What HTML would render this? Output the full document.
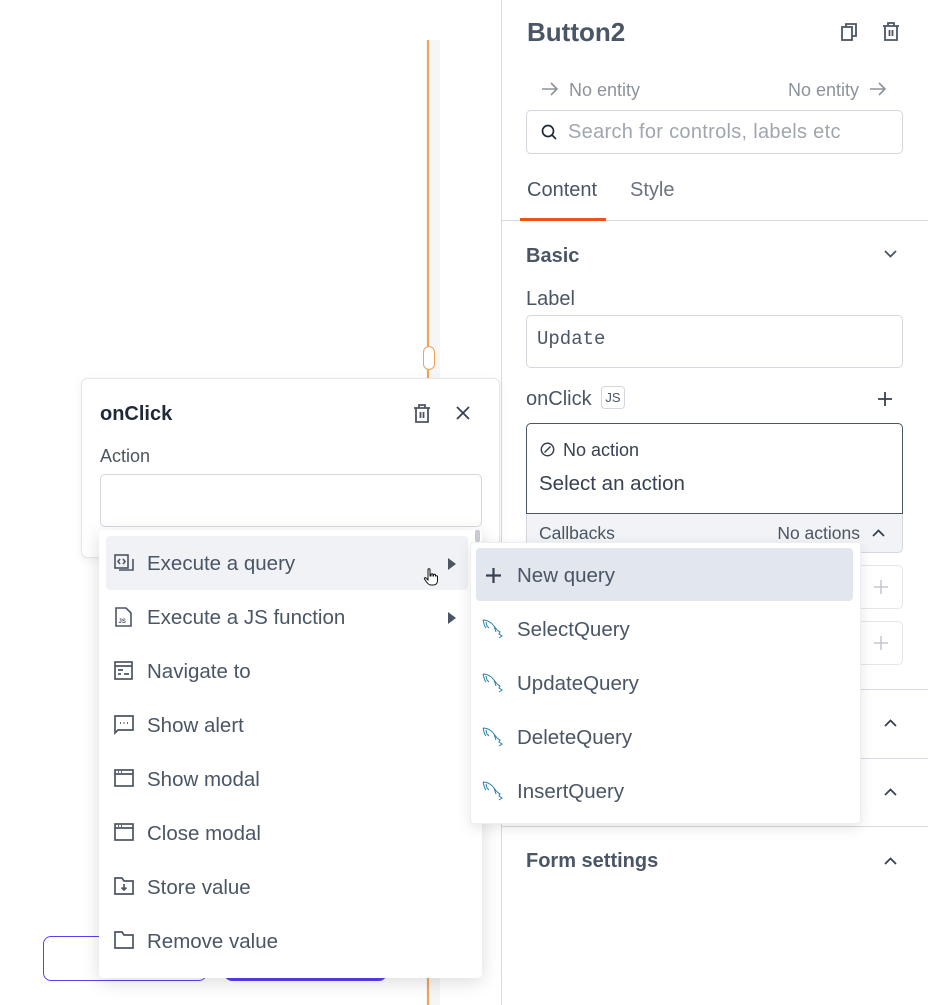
<!DOCTYPE html>
<html><head><meta charset="utf-8"><style>
*{box-sizing:border-box;margin:0;padding:0}
body{width:928px;height:1005px;position:relative;overflow:hidden;background:#fff;font-family:"Liberation Sans",sans-serif;color:#4b5563}
.a{position:absolute}
.t{position:absolute;white-space:nowrap;line-height:1}
svg{position:absolute;overflow:visible}
</style></head><body>
<!-- canvas -->
<div class="a" style="left:426px;top:40px;width:14px;height:965px;background:#f5f6f8"></div>
<div class="a" style="left:427px;top:40px;width:2px;height:965px;background:#f7a156"></div>
<div class="a" style="left:423px;top:346px;width:12px;height:24px;border:1.5px solid #f7a156;border-radius:6px;background:#fff"></div>
<div class="a" style="left:43px;top:936px;width:164px;height:45px;border:1.5px solid #5b3ff0;border-radius:8px"></div>
<div class="a" style="left:224px;top:936px;width:163px;height:45px;background:#5b3ff0;border-radius:8px"></div>

<!-- right panel -->
<div class="a" style="left:501px;top:0;width:1px;height:1005px;background:#d6dbe1"></div>
<div class="t" style="left:527px;top:19px;font-size:26px;font-weight:bold;color:#4a5565">Button2</div>
<svg style="left:840px;top:22px" width="20" height="20" viewBox="0 0 20 20" fill="none" stroke="#4b5563" stroke-width="1.8"><rect x="2" y="5" width="10" height="13"/><path d="M6 5V2h10v12h-4"/></svg>
<svg style="left:881px;top:21px" width="20" height="20" viewBox="0 0 20 20" fill="none" stroke="#4b5563" stroke-width="1.8"><path d="M2 5h16M7 5V2h6v3M4 5v14h12V5M8.5 9v6M11.5 9v6"/></svg>
<svg style="left:541px;top:81px" width="18" height="16" viewBox="0 0 18 16" fill="none" stroke="#8d939c" stroke-width="1.6"><path d="M1 8h15M10 2l6 6-6 6"/></svg>
<div class="t" style="left:569px;top:81px;font-size:18px;color:#8d939c">No entity</div>
<div class="t" style="left:788px;top:81px;font-size:18px;color:#8d939c">No entity</div>
<svg style="left:869px;top:81px" width="18" height="16" viewBox="0 0 18 16" fill="none" stroke="#8d939c" stroke-width="1.6"><path d="M1 8h15M10 2l6 6-6 6"/></svg>
<div class="a" style="left:526px;top:110px;width:377px;height:44px;border:1px solid #d2d8de;border-radius:5px"></div>
<svg style="left:541px;top:124px" width="16" height="16" viewBox="0 0 16 16" fill="none" stroke="#1f2937" stroke-width="1.7"><circle cx="7" cy="7" r="5.5"/><path d="M11 11l4 4"/></svg>
<div class="t" style="left:568px;top:122px;font-size:20px;letter-spacing:0.3px;color:#a0a6ae">Search for controls, labels etc</div>
<div class="t" style="left:527px;top:180px;font-size:20px;color:#4a5565">Content</div>
<div class="t" style="left:630px;top:180px;font-size:20px;color:#6b7280">Style</div>
<div class="a" style="left:501px;top:220px;width:427px;height:1px;background:#d6dbe1"></div>
<div class="a" style="left:520px;top:218px;width:86px;height:3px;background:#e8541a"></div>
<div class="t" style="left:526px;top:246px;font-size:20px;font-weight:bold;color:#4a5565">Basic</div>
<svg style="left:884px;top:250px" width="13" height="9" viewBox="0 0 13 9" fill="none" stroke="#4b5563" stroke-width="1.8"><path d="M1 1l5.5 5.5L12 1"/></svg>
<div class="t" style="left:526px;top:289px;font-size:20px;color:#4a5565">Label</div>
<div class="a" style="left:526px;top:315px;width:377px;height:53px;border:1px solid #d2d8de;border-radius:5px"></div>
<div class="t" style="left:537px;top:330px;font-size:19px;font-family:'Liberation Mono',monospace;color:#4a5565">Update</div>
<div class="t" style="left:526px;top:389px;font-size:20px;color:#4a5565">onClick</div>
<div class="a" style="left:601px;top:386px;width:24px;height:23px;border:1px solid #d2d8de;border-radius:4px;font-size:13px;line-height:21px;text-align:center;color:#4b5563">JS</div>
<svg style="left:877px;top:391px" width="16" height="16" viewBox="0 0 16 16" stroke="#374151" stroke-width="1.8"><path d="M8 1v14M1 8h14"/></svg>
<div class="a" style="left:526px;top:423px;width:377px;height:130px;border:1px solid #d2d8de;border-radius:5px;background:#f1f3f6"></div>
<div class="a" style="left:526px;top:423px;width:377px;height:91px;border:1px solid #4b5563;border-radius:5px 5px 0 0;background:#fff"></div>
<svg style="left:540px;top:442px" width="15" height="15" viewBox="0 0 15 15" fill="none" stroke="#374151" stroke-width="1.5"><circle cx="7.5" cy="7.5" r="6.2"/><path d="M4.5 10.5l6-6"/></svg>
<div class="t" style="left:563px;top:441px;font-size:18px;color:#374151">No action</div>
<div class="t" style="left:539px;top:474px;font-size:20.5px;color:#374151">Select an action</div>
<div class="t" style="left:539px;top:525px;font-size:17.5px;color:#4b5563">Callbacks</div>
<div class="t" style="right:68px;top:525px;font-size:17.5px;color:#4b5563">No actions</div>
<svg style="left:872px;top:529px" width="13" height="8" viewBox="0 0 13 8" fill="none" stroke="#374151" stroke-width="1.8"><path d="M1 7l5.5-5.5L12 7"/></svg>
<div class="a" style="left:526px;top:565px;width:377px;height:44px;border:1px solid #e3e6ea;border-radius:5px"></div>
<div class="a" style="left:526px;top:621px;width:377px;height:44px;border:1px solid #e3e6ea;border-radius:5px"></div>
<svg style="left:873px;top:579px" width="16" height="16" viewBox="0 0 16 16" stroke="#c4c8ce" stroke-width="1.5"><path d="M8 1v14M1 8h14"/></svg>
<svg style="left:873px;top:635px" width="16" height="16" viewBox="0 0 16 16" stroke="#c4c8ce" stroke-width="1.5"><path d="M8 1v14M1 8h14"/></svg>
<div class="a" style="left:501px;top:689px;width:427px;height:1px;background:#d6dbe1"></div>
<div class="a" style="left:501px;top:758px;width:427px;height:1px;background:#d6dbe1"></div>
<div class="a" style="left:501px;top:826px;width:427px;height:1px;background:#d6dbe1"></div>
<svg style="left:884px;top:719px" width="13" height="8" viewBox="0 0 13 8" fill="none" stroke="#374151" stroke-width="1.8"><path d="M1 7l5.5-5.5L12 7"/></svg>
<svg style="left:884px;top:788px" width="13" height="8" viewBox="0 0 13 8" fill="none" stroke="#374151" stroke-width="1.8"><path d="M1 7l5.5-5.5L12 7"/></svg>
<svg style="left:884px;top:857px" width="13" height="8" viewBox="0 0 13 8" fill="none" stroke="#374151" stroke-width="1.8"><path d="M1 7l5.5-5.5L12 7"/></svg>
<div class="t" style="left:526px;top:851px;font-size:20px;font-weight:bold;color:#4a5565">Form settings</div>

<!-- onClick card -->
<div class="a" style="left:81px;top:378px;width:419px;height:180px;border:1px solid #e3e6ea;border-radius:6px;background:#fff;box-shadow:0 2px 10px rgba(0,0,0,.06)"></div>
<div class="t" style="left:100px;top:404px;font-size:20px;font-weight:bold;color:#1f2937">onClick</div>
<svg style="left:412px;top:403px" width="20" height="20" viewBox="0 0 20 20" fill="none" stroke="#4b5563" stroke-width="1.8"><path d="M2 5h16M7 5V2h6v3M4 5v14h12V5M8.5 9v6M11.5 9v6"/></svg>
<svg style="left:456px;top:406px" width="14" height="14" viewBox="0 0 14 14" stroke="#374151" stroke-width="1.8"><path d="M1 1l12 12M13 1L1 13"/></svg>
<div class="t" style="left:100px;top:447px;font-size:18px;color:#4b5563">Action</div>
<div class="a" style="left:100px;top:474px;width:382px;height:53px;border:1px solid #d2d8de;border-radius:5px"></div>

<!-- dropdown -->
<div class="a" style="left:99px;top:530px;width:383px;height:448px;background:#fff;border-radius:4px;box-shadow:0 4px 18px rgba(0,0,0,.14)"></div>
<div class="a" style="left:475px;top:530px;width:5px;height:12px;background:#c8ccd2;border-radius:2px"></div>
<div class="a" style="left:106px;top:536px;width:362px;height:54px;background:#f0f2f6;border-radius:4px"></div>
<div style="position:absolute;left:0;top:0;font-size:20.5px;color:#4a5565">
<div class="t" style="left:147px;top:554px">Execute a query</div>
<div class="t" style="left:147px;top:608px">Execute a JS function</div>
<div class="t" style="left:147px;top:662px">Navigate to</div>
<div class="t" style="left:147px;top:716px">Show alert</div>
<div class="t" style="left:147px;top:770px">Show modal</div>
<div class="t" style="left:147px;top:824px">Close modal</div>
<div class="t" style="left:147px;top:878px">Store value</div>
<div class="t" style="left:147px;top:932px">Remove value</div>
</div>
<svg style="left:114px;top:554px" width="20" height="20" viewBox="0 0 20 20" fill="none" stroke="#4b5563" stroke-width="1.6"><rect x="1" y="1" width="13" height="13"/><path d="M5 16h14V5M6 5l-2 2.5L6 10M9 5l2 2.5L9 10"/></svg>
<svg style="left:115px;top:607px" width="18" height="20" viewBox="0 0 18 20" fill="none" stroke="#4b5563" stroke-width="1.6"><path d="M1 1h10l5 5v13H1z"/><text x="3.5" y="16" font-size="6" font-family="Liberation Sans" font-weight="bold" fill="#4b5563" stroke="none">JS</text></svg>
<svg style="left:114px;top:661px" width="19" height="19" viewBox="0 0 19 19" fill="none" stroke="#4b5563" stroke-width="1.7"><rect x="1" y="1" width="17" height="17"/><path d="M1 5h17M4 9h5M4 13h3M10 13h5"/></svg>
<svg style="left:114px;top:715px" width="20" height="20" viewBox="0 0 20 20" fill="none" stroke="#4b5563" stroke-width="1.7"><path d="M1 1h18v14H4l-3 3z"/><path d="M6 8h1M9.5 8h1M13 8h1"/></svg>
<svg style="left:114px;top:769px" width="20" height="18" viewBox="0 0 20 18" fill="none" stroke="#4b5563" stroke-width="1.7"><rect x="1" y="1" width="18" height="16"/><path d="M1 5h18M4 3h1M7 3h1"/></svg>
<svg style="left:114px;top:823px" width="20" height="18" viewBox="0 0 20 18" fill="none" stroke="#4b5563" stroke-width="1.7"><rect x="1" y="1" width="18" height="16"/><path d="M1 5h18M4 3h1M7 3h1"/></svg>
<svg style="left:114px;top:877px" width="20" height="18" viewBox="0 0 20 18" fill="none" stroke="#4b5563" stroke-width="1.7"><path d="M1 1h7l2 3h9v13H1z"/><path d="M10 7v6M7.5 10.5L10 13l2.5-2.5"/></svg>
<svg style="left:114px;top:931px" width="20" height="18" viewBox="0 0 20 18" fill="none" stroke="#4b5563" stroke-width="1.7"><path d="M1 1h7l2 3h9v13H1z"/></svg>
<svg style="left:448px;top:558px" width="8" height="12" viewBox="0 0 8 12"><path d="M0 0l8 6-8 6z" fill="#4b5563"/></svg>
<svg style="left:448px;top:612px" width="8" height="12" viewBox="0 0 8 12"><path d="M0 0l8 6-8 6z" fill="#4b5563"/></svg>
<svg style="left:423px;top:568px" width="16" height="18" viewBox="0 0 16 18" fill="#fff" stroke="#111" stroke-width="1"><path d="M5 1.5c0-1 2-1 2 0V8h1V6.5c0-1 2-1 2 0V8h.5V7c0-1 2-1 2 0v1.5c0-1 2-1 2 0V13c0 2-1.5 4-4 4H8c-2 0-3-1-4.5-3L1.5 11c-.6-.8.5-1.8 1.3-1.1L5 12z"/></svg>

<!-- submenu -->
<div class="a" style="left:470px;top:542px;width:391px;height:282px;background:#fff;border:1px solid #eceef1;border-radius:4px;box-shadow:0 4px 14px rgba(0,0,0,.1)"></div>
<div class="a" style="left:476px;top:548px;width:377px;height:53px;background:#e2e6ed;border-radius:4px"></div>
<svg style="left:485px;top:567px" width="17" height="17" viewBox="0 0 17 17" stroke="#374151" stroke-width="2.2"><path d="M8.5 1v15M1 8.5h15"/></svg>
<div style="position:absolute;left:0;top:0;font-size:20.5px;color:#4a5565">
<div class="t" style="left:517px;top:566px">New query</div>
<div class="t" style="left:517px;top:620px">SelectQuery</div>
<div class="t" style="left:517px;top:674px">UpdateQuery</div>
<div class="t" style="left:517px;top:728px">DeleteQuery</div>
<div class="t" style="left:517px;top:782px">InsertQuery</div>
</div>
<svg style="left:482px;top:618px" width="24" height="24" viewBox="0 0 24 24" fill="none" stroke="#2a7fa5" stroke-width="1"><path d="M1 2c4 0 8 2 11 6 2 3 4 5 6 6l-1 2 3 2-3 2M1 2c1 3 1 6 3 8M4 4l1 4 2 2M12 8l2 6"/></svg>
<svg style="left:482px;top:672px" width="24" height="24" viewBox="0 0 24 24" fill="none" stroke="#2a7fa5" stroke-width="1"><path d="M1 2c4 0 8 2 11 6 2 3 4 5 6 6l-1 2 3 2-3 2M1 2c1 3 1 6 3 8M4 4l1 4 2 2M12 8l2 6"/></svg>
<svg style="left:482px;top:726px" width="24" height="24" viewBox="0 0 24 24" fill="none" stroke="#2a7fa5" stroke-width="1"><path d="M1 2c4 0 8 2 11 6 2 3 4 5 6 6l-1 2 3 2-3 2M1 2c1 3 1 6 3 8M4 4l1 4 2 2M12 8l2 6"/></svg>
<svg style="left:482px;top:780px" width="24" height="24" viewBox="0 0 24 24" fill="none" stroke="#2a7fa5" stroke-width="1"><path d="M1 2c4 0 8 2 11 6 2 3 4 5 6 6l-1 2 3 2-3 2M1 2c1 3 1 6 3 8M4 4l1 4 2 2M12 8l2 6"/></svg>
</body></html>
